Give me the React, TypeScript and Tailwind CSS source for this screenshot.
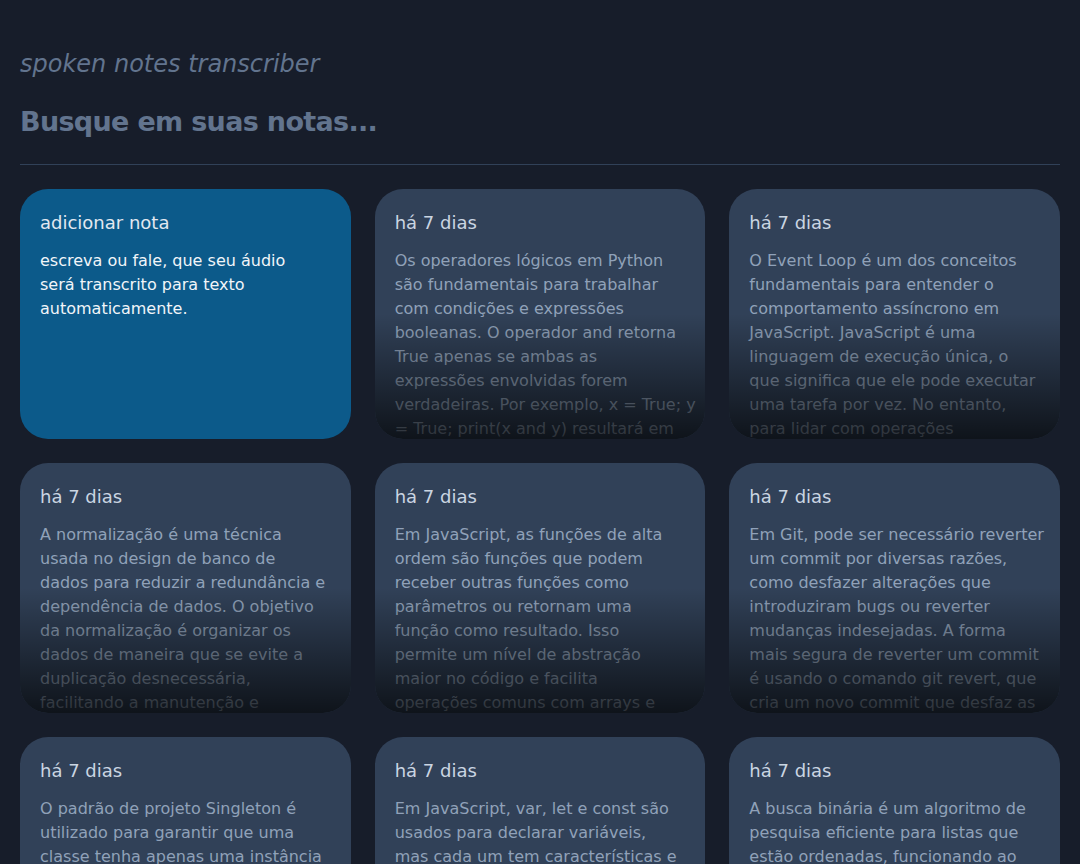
import React from "react";

type Note = {
  date: string;
  lines: string[];
};

const notes: Note[] = [
  {
    date: "há 7 dias",
    lines: [
      "Os operadores lógicos em Python",
      "são fundamentais para trabalhar",
      "com condições e expressões",
      "booleanas. O operador and retorna",
      "True apenas se ambas as",
      "expressões envolvidas forem",
      "verdadeiras. Por exemplo, x = True; y",
      "= True; print(x and y) resultará em",
      "True. Já o operador or retorna True",
      "se pelo menos uma for verdadeira.",
    ],
  },
  {
    date: "há 7 dias",
    lines: [
      "O Event Loop é um dos conceitos",
      "fundamentais para entender o",
      "comportamento assíncrono em",
      "JavaScript. JavaScript é uma",
      "linguagem de execução única, o",
      "que significa que ele pode executar",
      "uma tarefa por vez. No entanto,",
      "para lidar com operações",
      "assíncronas, ele usa o Event Loop.",
    ],
  },
  {
    date: "há 7 dias",
    lines: [
      "A normalização é uma técnica",
      "usada no design de banco de",
      "dados para reduzir a redundância e",
      "dependência de dados. O objetivo",
      "da normalização é organizar os",
      "dados de maneira que se evite a",
      "duplicação desnecessária,",
      "facilitando a manutenção e",
      "garantindo a integridade dos dados.",
    ],
  },
  {
    date: "há 7 dias",
    lines: [
      "Em JavaScript, as funções de alta",
      "ordem são funções que podem",
      "receber outras funções como",
      "parâmetros ou retornam uma",
      "função como resultado. Isso",
      "permite um nível de abstração",
      "maior no código e facilita",
      "operações comuns com arrays e",
      "objetos, como map e filter.",
    ],
  },
  {
    date: "há 7 dias",
    lines: [
      "Em Git, pode ser necessário reverter",
      "um commit por diversas razões,",
      "como desfazer alterações que",
      "introduziram bugs ou reverter",
      "mudanças indesejadas. A forma",
      "mais segura de reverter um commit",
      "é usando o comando git revert, que",
      "cria um novo commit que desfaz as",
      "alterações do commit original.",
    ],
  },
  {
    date: "há 7 dias",
    lines: [
      "O padrão de projeto Singleton é",
      "utilizado para garantir que uma",
      "classe tenha apenas uma instância",
      "e fornecer um ponto global de",
      "acesso a ela.",
    ],
  },
  {
    date: "há 7 dias",
    lines: [
      "Em JavaScript, var, let e const são",
      "usados para declarar variáveis,",
      "mas cada um tem características e",
      "comportamentos diferentes em",
      "relação a escopo e hoisting.",
    ],
  },
  {
    date: "há 7 dias",
    lines: [
      "A busca binária é um algoritmo de",
      "pesquisa eficiente para listas que",
      "estão ordenadas, funcionando ao",
      "dividir repetidamente o intervalo",
      "de busca pela metade.",
    ],
  },
];

function Lines({ lines }: { lines: string[] }) {
  return (
    <>
      {lines.map((line, i) => (
        <span key={i} className="block whitespace-nowrap">
          {line}
        </span>
      ))}
    </>
  );
}

function NoteCard({ note }: { note: Note }) {
  return (
    <button className="relative flex flex-col gap-3 overflow-hidden rounded-[28px] bg-slate-700 p-5 text-left outline-none">
      <span className="text-lg font-medium text-slate-300">{note.date}</span>
      <p className="text-base leading-6 text-slate-400">
        <Lines lines={note.lines} />
      </p>
      <div className="pointer-events-none absolute bottom-0 left-0 right-0 h-1/2 bg-gradient-to-t from-black/70 to-black/0" />
    </button>
  );
}

export default function App() {
  return (
    <div className="min-h-screen bg-[#171d2a] font-['DejaVu_Sans',sans-serif]">
      <div className="mx-auto max-w-6xl space-y-6 px-5 py-12">
        <p className="text-2xl italic text-slate-500">spoken notes transcriber</p>

        <form className="w-full">
          <input
            type="text"
            placeholder="Busque em suas notas..."
            className="w-full bg-transparent text-[27px] leading-9 font-semibold tracking-tight text-slate-300 outline-none placeholder:text-slate-500"
          />
        </form>

        <div className="h-px bg-slate-700" />

        <div className="grid auto-rows-[250px] grid-cols-3 gap-6">
          <div className="flex flex-col gap-3 overflow-hidden rounded-[28px] bg-[#0c5a8a] p-5 text-left">
            <span className="text-lg font-medium text-slate-200">adicionar nota</span>
            <p className="text-base leading-6 text-slate-100">
              <Lines lines={["escreva ou fale, que seu áudio", "será transcrito para texto", "automaticamente."]} />
            </p>
          </div>

          {notes.map((note, i) => (
            <NoteCard key={i} note={note} />
          ))}
        </div>
      </div>
    </div>
  );
}
